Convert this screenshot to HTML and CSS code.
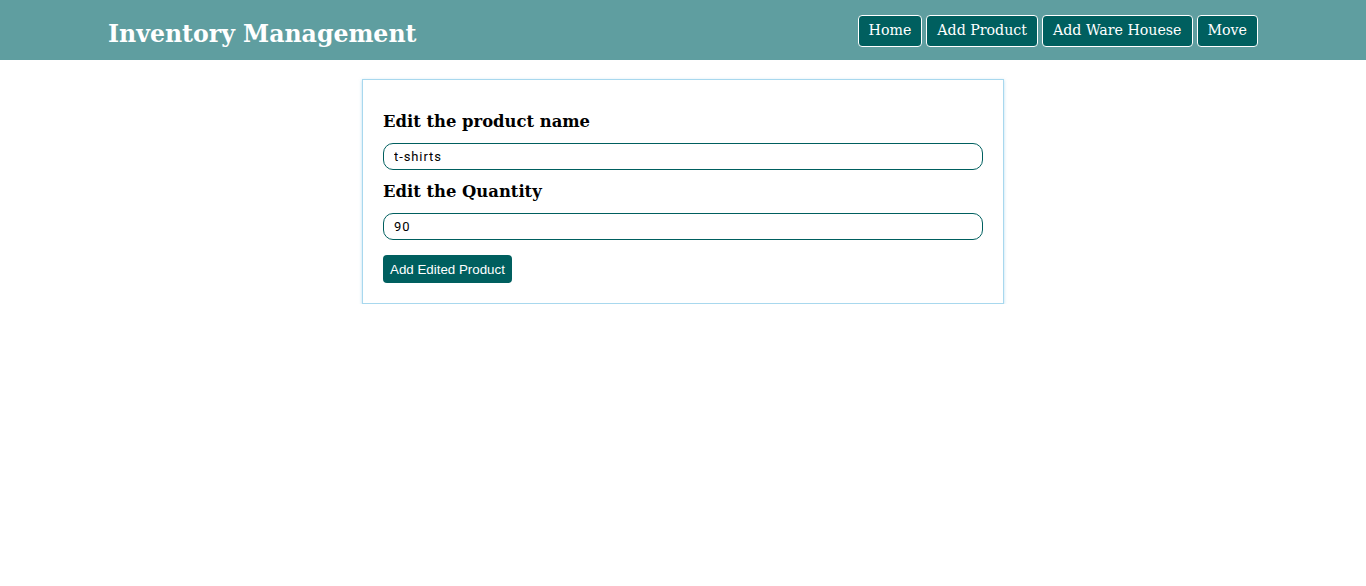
FILE: index.html
```html
<!DOCTYPE html>
<html>
<head>
<meta charset="utf-8">
<title>Inventory Management</title>
<link rel="stylesheet" href="styles.css">
</head>
<body>
<nav class="navbar">
  <div class="brand">Inventory Management</div>
  <div class="links">
    <a class="nav-btn" href="#">Home</a>
    <a class="nav-btn" href="#">Add Product</a>
    <a class="nav-btn" href="#">Add Ware Houese</a>
    <a class="nav-btn" href="#">Move</a>
  </div>
</nav>
<main class="main">
  <form class="card">
    <h3 class="label">Edit the product name</h3>
    <input class="field" type="text" value="t-shirts">
    <h3 class="label">Edit the Quantity</h3>
    <input class="field" type="text" value="90">
    <button class="submit" type="button">Add Edited Product</button>
  </form>
</main>
</body>
</html>
```
FILE: styles.css
```css
* { box-sizing: border-box; }
body {
  margin: 0;
  font-family: Georgia, "DejaVu Serif", "Liberation Serif", serif;
  background: #fff;
}
.navbar {
  height: 60px;
  background: #5f9ea0;
  display: flex;
  align-items: center;
  justify-content: space-between;
  padding: 0 108px;
}
.brand {
  color: #fff;
  font-size: 23.6px;
  font-weight: bold;
  padding-top: 8px;
}
.links {
  display: flex;
  gap: 4px;
  padding-top: 1px;
}
.nav-btn {
  display: block;
  color: #fff;
  text-decoration: none;
  background: #005f5f;
  border: 1px solid #fff;
  border-radius: 4px;
  padding: 0 10px;
  height: 32px;
  line-height: 29px;
  font-size: 14.2px;
}
.main {
  display: flex;
  justify-content: center;
  padding-top: 19px;
}
.card {
  width: 642px;
  border: 1px solid #a8d8ee;
  box-shadow: 0 1px 3px rgba(120, 190, 230, 0.5);
  padding: 20px;
  display: flex;
  flex-direction: column;
  align-items: flex-start;
}
.label {
  font-size: 16.4px;
  line-height: 23px;
  font-weight: bold;
  margin: 10px 0;
  color: #000;
}
.field {
  width: 600px;
  height: 27px;
  border: 1px solid #005f5f;
  border-radius: 10px;
  padding: 0 10px;
  font-family: Roboto, "Liberation Sans", sans-serif;
  font-size: 13px;
  letter-spacing: 0.9px;
  color: #000;
  outline: none;
}
.submit {
  margin-top: 15px;
  background: #005f5f;
  color: #fff;
  border: none;
  border-radius: 4px;
  height: 28px;
  padding: 0 7px;
  font-family: "Liberation Sans", Arial, sans-serif;
  font-size: 13.33px;
}
```
